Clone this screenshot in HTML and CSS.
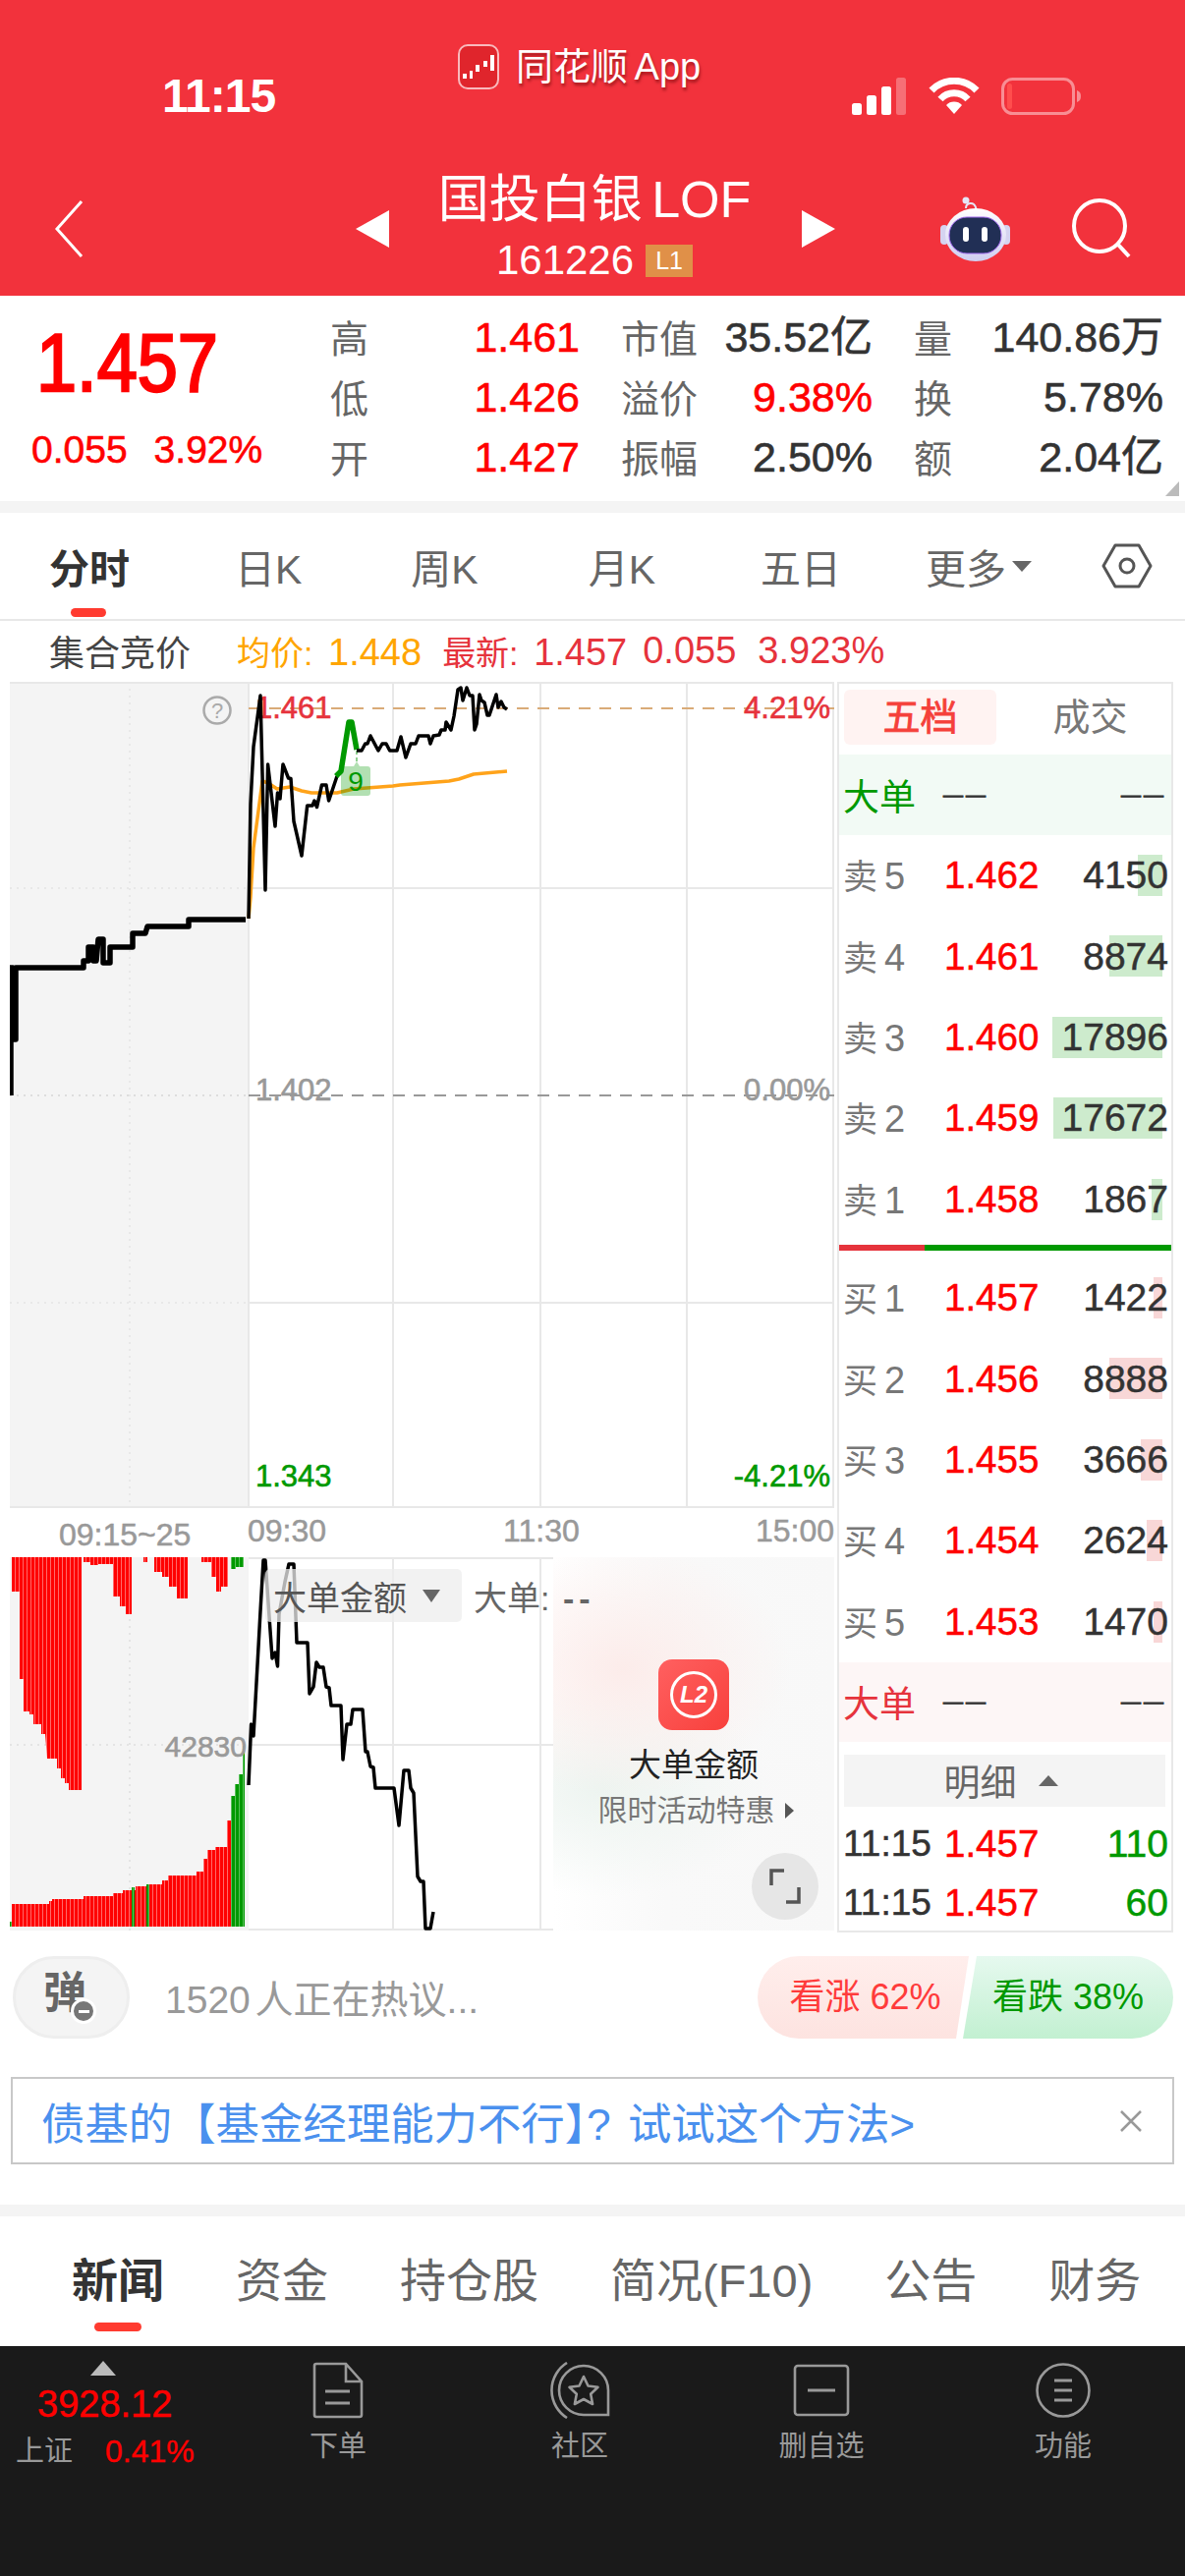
FILE: index.html
```html
<!DOCTYPE html>
<html lang="zh-CN">
<head>
    <meta charset="UTF-8">
    <meta name="viewport" content="width=device-width, initial-scale=1.0">
    <title>国投白银 LOF</title>
    <link rel="stylesheet" href="styles.css">
</head>
<body>
<div class="screen">

    <header class="top">
        <div class="status">
            <span class="status-time">11:15</span>
            <div class="status-app">
                <svg class="app-logo" viewBox="0 0 42 46">
                    <rect x="1" y="1" width="40" height="44" rx="9" fill="#e0252c" stroke="#f9b9bc" stroke-width="2"/>
                    <path d="M5 30h4v5H5zM12 27h3v8h-3zM18 21h4v7h-4zM26 17h4v6h-4zM33 11h4v16h-4z" fill="#fff"/>
                </svg>
                <span class="app-name">同花顺 App</span>
            </div>
            <div class="status-icons">
                <svg width="56" height="38" viewBox="0 0 56 38">
                    <rect x="0" y="26" width="10" height="12" rx="2.5" fill="#fff"/>
                    <rect x="15" y="18" width="10" height="20" rx="2.5" fill="#fff"/>
                    <rect x="30" y="9" width="10" height="29" rx="2.5" fill="#fff"/>
                    <rect x="45" y="0" width="10" height="38" rx="2.5" fill="#fff" opacity=".3"/>
                </svg>
                <svg width="52" height="38" viewBox="0 0 52 38">
                    <path d="M3 13a32 32 0 0 1 46 0" fill="none" stroke="#fff" stroke-width="7"/>
                    <path d="M12 22a19 19 0 0 1 28 0" fill="none" stroke="#fff" stroke-width="7"/>
                    <path d="M26 37l-8-9a11 11 0 0 1 16 0z" fill="#fff"/>
                </svg>
                <svg width="82" height="38" viewBox="0 0 82 38">
                    <rect x="1.500" y="1.500" width="72" height="35" rx="10" fill="none" stroke="#fff" stroke-opacity=".45" stroke-width="3"/>
                    <rect x="6" y="6" width="5" height="26" rx="2.5" fill="#ff4d4d"/>
                    <path d="M77 13c3 1 4 3 4 6s-1 5-4 6z" fill="#fff" opacity=".45"/>
                </svg>
            </div>
        </div>
        <div class="nav">
            <svg class="nav-back" viewBox="0 0 30 58"><path d="M28 1L3 29l25 28" fill="none" stroke="#fff" stroke-width="3"/></svg>
            <span class="arrow-left"></span>
            <div class="title-block">
                <div class="title">国投白银 LOF</div>
                <div class="code">161226<span class="level">L1</span></div>
            </div>
            <span class="arrow-right"></span>
            <svg class="robot" viewBox="0 0 72 66">
                <defs>
                    <linearGradient id="helmet" x1="0" y1="0" x2="0" y2="1"><stop offset="0" stop-color="#fff"/><stop offset="1" stop-color="#cfcdf0"/></linearGradient>
                </defs>
                <path d="M26 12c0-6 8-7 10-1l1 5" fill="none" stroke="#e6e6f6" stroke-width="2"/>
                <circle cx="26" cy="4" r="3.500" fill="#e6e6f6"/>
                <rect x="0" y="29" width="8" height="20" rx="4" fill="#d5d3f0"/>
                <rect x="63" y="29" width="8" height="20" rx="4" fill="#d5d3f0"/>
                <ellipse cx="36" cy="39" rx="31" ry="27" fill="url(#helmet)"/>
                <rect x="9" y="21" width="53" height="37" rx="18" fill="#212f55" stroke="#a46cf0" stroke-width="1"/>
                <rect x="23" y="31" width="6" height="15" rx="3" fill="#fff"/>
                <rect x="42" y="31" width="6" height="15" rx="3" fill="#fff"/>
            </svg>
            <svg class="search" viewBox="0 0 60 62">
                <circle cx="28" cy="28" r="26" fill="none" stroke="#fff" stroke-width="4"/>
                <path d="M47 47l11 12" stroke="#fff" stroke-width="4"/>
            </svg>
        </div>
    </header>

    <section class="quote">
        <div class="quote-main">
            <div class="last-price"><span>1.457</span></div>
            <div class="last-change"><span>0.055</span><span>3.92%</span></div>
        </div>
        <div class="quote-grid">
            <div class="cell"><span class="cell-label">高</span><span class="red">1.461</span></div>
            <div class="cell"><span class="cell-label">市值</span><span>35.52<span class="unit">亿</span></span></div>
            <div class="cell"><span class="cell-label">量</span><span>140.86<span class="unit">万</span></span></div>
            <div class="cell"><span class="cell-label">低</span><span class="red">1.426</span></div>
            <div class="cell"><span class="cell-label">溢价</span><span class="red">9.38%</span></div>
            <div class="cell"><span class="cell-label">换</span><span>5.78%</span></div>
            <div class="cell"><span class="cell-label">开</span><span class="red">1.427</span></div>
            <div class="cell"><span class="cell-label">振幅</span><span>2.50%</span></div>
            <div class="cell"><span class="cell-label">额</span><span>2.04<span class="unit">亿</span></span></div>
        </div>
        <span class="corner"></span>
    </section>

    <nav class="periods">
        <span class="period period-on">分时</span>
        <span class="period p-day">日K</span>
        <span class="period p-week">周K</span>
        <span class="period p-month">月K</span>
        <span class="period p-five">五日</span>
        <span class="period p-more">更多<i class="more-caret"></i></span>
        <svg class="hex" viewBox="0 0 52 46">
            <path d="M14 2h24l12 21-12 21H14L2 23z" fill="none" stroke="#555" stroke-width="3" stroke-linejoin="round"/>
            <circle cx="26" cy="23" r="7" fill="none" stroke="#555" stroke-width="3"/>
        </svg>
    </nav>

    <div class="summary">
        <span class="auction">集合竞价</span>
        <span class="avg"><small>均价:</small> 1.448</span>
        <span class="latest"><small>最新:</small> 1.457</span>
        <span class="latest s-change">0.055</span>
        <span class="latest s-pct">3.923%</span>
    </div>

    <section class="market">
        <div class="charts">
            <svg class="chart-main" viewBox="10 694 839 841" width="839" height="841">
                <rect x="10" y="694" width="243" height="841" fill="#f4f4f4"/>
                <path d="M10 695H849V1534H10" fill="none" stroke="#e8e8e8" stroke-width="2"/>
                <path d="M253 694V1535M400 694V1535M550 694V1535M699 694V1535M848 694V1535M253 904H849M253 1326H849" stroke="#e8e8e8" stroke-width="2" fill="none"/>
                <path d="M10 904H253M10 1326H253M132 694V1535" stroke="#e8e8e8" stroke-width="2" stroke-dasharray="2 5" fill="none"/>
                <path d="M253 721H849" stroke="#d9ab78" stroke-width="2" stroke-dasharray="12 9"/>
                <path d="M253 1115H849" stroke="#999" stroke-width="2" stroke-dasharray="12 9"/>
                <path d="M10 1115H253" stroke="#ddd" stroke-width="2" stroke-dasharray="2 5"/>
                <circle cx="221" cy="723" r="13.500" fill="none" stroke="#aaa" stroke-width="2.500"/>
                <text class="help" x="221" y="731" text-anchor="middle">?</text>
                <text class="axis axis-up" x="260" y="731">1.461</text>
                <text class="axis axis-up" x="845" y="731" text-anchor="end">4.21%</text>
                <text class="axis axis-mid" x="260" y="1120">1.402</text>
                <text class="axis axis-mid" x="845" y="1120" text-anchor="end">0.00%</text>
                <text class="axis axis-down" x="260" y="1513">1.343</text>
                <text class="axis axis-down" x="845" y="1513" text-anchor="end">-4.21%</text>
                <polyline class="line-auction" points="11,1115 11,985 13,985 13,1058 16,1058 16,985 85,985 85,978 90,978 90,964 95,964 95,978 98,978 100,956 105,956 105,980 112,980 112,964 135,964 135,950 148,950 150,943 192,943 192,936 250,936"/>
                <polyline class="line-avg" points="253,935 255,913 258,863 267,795 273,797 282,803 295,801 307,805 317,807 343,807 360,803 400,800 407,799 457,795 467,793 482,788 516,785"/>
                <path class="badge" d="M350 780h10l3-5 3 5h8a3 3 0 0 1 3 3v24a3 3 0 0 1-3 3h-24a3 3 0 0 1-3-3v-24a3 3 0 0 1 3-3z"/>
                <path d="M363 764V776" stroke="#8fd08f" stroke-width="2" stroke-dasharray="4 3"/>
                <text class="badge-num" x="362" y="805" text-anchor="middle">9</text>
                <polyline class="line-price" points="253,935 255,818 258,760 265,708 270,906 272.6,778 280,841 282.5,807 285,813 288,778 293.5,792 296,792.5 299,836 302,849 307,871 312.7,820 318,820 320,815 322.5,821.5 327.5,799 332,799 334.6,815 343,790"/>
                <polyline class="line-hot" points="342,790 347,785 355,735 358,735 363,763"/>
                <polyline class="line-thin" points="363,764 368,764 371.7,757 374,757 377,749 385,764 389,757 393,757 396.7,764 404,764 408,750 413,771 418,757 423,757 426,749 436,749 438,757 441,749 447,748 449,743 453,743 454,735 459,743 462,729 466,702 469,700 471,713 475,700 478,708 481,708 483,743 485,737 488,707 490,713 493,715 496,728 498,728 505,707 507,720 510,714 513,720 516,722"/>
            </svg>

            <div class="time-axis">
                <span class="tick-auction">09:15~25</span>
                <span class="tick">09:30</span>
                <span class="tick tick-mid">11:30</span>
                <span class="tick tick-end">15:00</span>
            </div>

            <div class="flow">
                <svg class="chart-flow" viewBox="10 1585 839 380" width="839" height="380">
                    <defs>
                        <pattern id="redBars" width="4" height="8" patternUnits="userSpaceOnUse"><rect width="4" height="8" fill="#ff6a6a"/><rect width="3" height="8" fill="#ff0000"/></pattern>
                        <pattern id="greenBars" width="4" height="8" patternUnits="userSpaceOnUse"><rect width="4" height="8" fill="#5cc05c"/><rect width="3" height="8" fill="#009900"/></pattern>
                    </defs>
                    <rect x="10" y="1585" width="243" height="380" fill="#f4f4f4"/>
                    <path d="M253 1586H849M400 1585V1965M550 1585V1965M253 1776H849M253 1964H849" stroke="#e8e8e8" stroke-width="2" fill="none"/>
                    <path d="M10 1776H253M132 1585V1965" stroke="#e4e4e4" stroke-width="2" stroke-dasharray="2 5" fill="none"/>
                    <path fill="url(#redBars)" d="M12 1585V1620H16L20 1620V1709H24V1742H30V1745H34V1755H42V1765H46L48 1790H58V1800H62V1810H66V1815H70V1822H83V1585H85V1590H92V1593H100V1592H115V1625H122V1635H128V1643H134V1585H146V1590H150V1585H157V1600H165V1605H172V1615H180V1627H191V1585H205V1590H215V1605H220V1620H225V1615H232V1585Z"/>
                    <path fill="url(#greenBars)" d="M235 1585V1597H240V1595H248V1585Z"/>
                    <path fill="url(#redBars)" d="M12 1961V1938H50V1935H53V1933H85V1930H115V1927H125V1924H138V1920H150V1918H165V1914H171V1909H200V1905H207V1892H211V1883H219V1880H231V1853H235V1961Z"/>
                    <path fill="url(#greenBars)" d="M235 1961V1828H239V1816H243V1806H247V1777H249V1961ZM134 1961V1921H137V1961ZM149 1961V1918H152V1961ZM10 1961V1956H12V1961Z"/>
                    <text class="axis axis-flow" x="251" y="1788" text-anchor="end">42830</text>
                    <polyline class="line-thin" points="253,1817 255.6,1755 258,1767 265,1640 268,1588 270,1588 277,1688 280,1682 282.5,1696 284,1643 290,1610 294,1592 299,1592 302,1672 313,1672 315,1724 319,1717 322,1692 325,1697 329,1697 332,1717 335,1718 337,1736 347,1736 349,1791 353,1755 357,1755 359,1740 369,1740 372,1783 374,1783 377,1798 380,1799 382,1820 401,1820 406,1858 411,1802 416,1802 418,1820 421,1825 425,1910 428,1915 431,1915 433,1963 438,1963 441,1946"/>
                </svg>
                <div class="upsell">
                    <div class="l2-icon"><span class="l2-ring">L2</span></div>
                    <div class="upsell-title">大单金额</div>
                    <div class="upsell-sub">限时活动特惠<i class="sub-caret"></i></div>
                    <span class="expand">
                        <svg width="32" height="36" viewBox="0 0 32 36"><path d="M15 2H2V17M17 34H30V19" fill="none" stroke="#555" stroke-width="3.500"/></svg>
                    </span>
                </div>
                <div class="flow-tools">
                    <span class="flow-select">大单金额<i class="select-caret"></i></span>
                    <span class="flow-value">大单: <span class="flow-dash">--</span></span>
                </div>
            </div>
        </div>

        <aside class="book">
            <div class="book-tabs">
                <span class="book-tab book-tab-on">五档</span>
                <span class="book-tab">成交</span>
            </div>
            <div class="big-row big-green"><span class="big-label">大单</span><span class="dash dash-price">——</span><span class="dash">——</span></div>

            <div class="book-row"><span class="side">卖<b>5</b></span><span class="price">1.462</span><span class="vol">4150</span><i class="depth depth-sell" style="width:25px"></i></div>
            <div class="book-row"><span class="side">卖<b>4</b></span><span class="price">1.461</span><span class="vol">8874</span><i class="depth depth-sell" style="width:54px"></i></div>
            <div class="book-row"><span class="side">卖<b>3</b></span><span class="price">1.460</span><span class="vol">17896</span><i class="depth depth-sell" style="width:112px"></i></div>
            <div class="book-row"><span class="side">卖<b>2</b></span><span class="price">1.459</span><span class="vol">17672</span><i class="depth depth-sell" style="width:111px"></i></div>
            <div class="book-row"><span class="side">卖<b>1</b></span><span class="price">1.458</span><span class="vol">1867</span><i class="depth depth-sell" style="width:11px"></i></div>

            <div class="split"><i class="split-red"></i><i class="split-green"></i></div>

            <div class="book-row"><span class="side">买<b>1</b></span><span class="price">1.457</span><span class="vol">1422</span><i class="depth depth-buy" style="width:9px"></i></div>
            <div class="book-row"><span class="side">买<b>2</b></span><span class="price">1.456</span><span class="vol">8888</span><i class="depth depth-buy" style="width:54px"></i></div>
            <div class="book-row"><span class="side">买<b>3</b></span><span class="price">1.455</span><span class="vol">3666</span><i class="depth depth-buy" style="width:22px"></i></div>
            <div class="book-row"><span class="side">买<b>4</b></span><span class="price">1.454</span><span class="vol">2624</span><i class="depth depth-buy" style="width:16px"></i></div>
            <div class="book-row"><span class="side">买<b>5</b></span><span class="price">1.453</span><span class="vol">1470</span><i class="depth depth-buy" style="width:9px"></i></div>

            <div class="big-row big-red"><span class="big-label">大单</span><span class="dash dash-price">——</span><span class="dash">——</span></div>
            <div class="detail-head">明细<i class="detail-caret"></i></div>
            <div class="trade"><span class="trade-time">11:15</span><span class="price">1.457</span><span class="trade-vol">110</span></div>
            <div class="trade"><span class="trade-time">11:15</span><span class="price">1.457</span><span class="trade-vol">60</span></div>
        </aside>
    </section>

    <div class="chat">
        <div class="danmu">弹<i class="danmu-off"></i></div>
        <span class="chat-text">1520 人正在热议...</span>
        <div class="votes">
            <span class="vote vote-up">看涨 62%</span>
            <span class="vote vote-down">看跌 38%</span>
        </div>
    </div>

    <div class="banner">
        <span class="banner-text">债基的【基金经理能力不行<span class="bracket-end">】</span>? 试试这个方法&gt;</span>
        <svg class="banner-close" width="24" height="24" viewBox="0 0 24 24"><path d="M2 2l20 20M22 2L2 22" stroke="#999" stroke-width="2.500"/></svg>
    </div>

    <nav class="news-tabs">
        <span class="news-tab news-tab-on">新闻</span>
        <span class="news-tab">资金</span>
        <span class="news-tab">持仓股</span>
        <span class="news-tab">简况(F10)</span>
        <span class="news-tab">公告</span>
        <span class="news-tab">财务</span>
    </nav>

    <footer class="bottom">
        <div class="index">
            <i class="index-arrow"></i>
            <div class="index-value">3928.12</div>
            <div class="index-line"><span class="index-name">上证</span><span class="index-pct">0.41%</span></div>
        </div>
        <div class="tool">
            <svg width="52" height="58" viewBox="0 0 52 58">
                <path d="M2 4a2 2 0 0 1 2-2h30l16 18v34a2 2 0 0 1-2 2H4a2 2 0 0 1-2-2zM34 2v18h16" fill="none" stroke="#999" stroke-width="2.600"/>
                <path d="M13 30h25M13 42h25" stroke="#999" stroke-width="3"/>
            </svg>
            <span>下单</span>
        </div>
        <div class="tool">
            <svg width="62" height="58" viewBox="0 0 62 58">
                <path d="M18 1a33 33 0 0 0 0 56" fill="none" stroke="#999" stroke-width="2.600"/>
                <path d="M35 4a25 25 0 0 1 25 25v25H35a25 25 0 0 1 0-50z" fill="none" stroke="#999" stroke-width="2.600"/>
                <path d="M35 15l4.500 9.500 10 1.300-7.300 7 1.900 10.200-9.100-5-9.100 5 1.900-10.200-7.300-7 10-1.300z" fill="none" stroke="#999" stroke-width="2.600" stroke-linejoin="round"/>
            </svg>
            <span>社区</span>
        </div>
        <div class="tool">
            <svg width="58" height="58" viewBox="0 0 58 58">
                <rect x="2" y="4" width="54" height="50" rx="3" fill="none" stroke="#999" stroke-width="2.600"/>
                <path d="M15 29h28" stroke="#999" stroke-width="3"/>
            </svg>
            <span>删自选</span>
        </div>
        <div class="tool">
            <svg width="58" height="58" viewBox="0 0 58 58">
                <circle cx="29" cy="29" r="26.500" fill="none" stroke="#999" stroke-width="2.600"/>
                <path d="M20 19h18M20 29h18M20 39h18" stroke="#999" stroke-width="3"/>
            </svg>
            <span>功能</span>
        </div>
    </footer>
</div>
</body>
</html>
```

FILE: styles.css
```css
* {
    box-sizing: border-box;
}

body {
    margin: 0;
    background-color: #ffffff;
    font-family: "Liberation Sans", "Noto Sans CJK SC", sans-serif;
    color: #333333;
}

i {
    display: block;
}

.screen {
    width: 1206px;
    height: 2622px;
    overflow: hidden;
    display: flex;
    flex-direction: column;
}

.red {
    color: #ff0000;
}

/* red header */
.top {
    height: 301px;
    flex-shrink: 0;
    background-color: #f2323c;
    color: #ffffff;
}

.status {
    height: 140px;
    display: flex;
    align-items: flex-start;
    padding-left: 165px;
}

.status-time {
    margin-top: 68px;
    width: 115px;
    font-size: 48px;
    line-height: 60px;
    font-weight: 700;
    letter-spacing: -1px;
    white-space: nowrap;
}

.status-app {
    margin-left: 186px;
    margin-top: 45px;
    display: flex;
    align-items: center;
    gap: 17px;
}

.app-logo {
    width: 42px;
    height: 46px;
}

.app-name {
    font-size: 38px;
    word-spacing: -4px;
    line-height: 46px;
    text-shadow: 1px 3px 3px rgba(90, 0, 0, 0.5);
    white-space: nowrap;
}

.status-icons {
    margin-left: auto;
    margin-top: 79px;
    padding-right: 105px;
    display: flex;
    gap: 22px;
}

.nav {
    height: 161px;
    display: flex;
    align-items: center;
    padding-top: 24px;
    padding-left: 55px;
}

.nav-back {
    width: 30px;
    height: 58px;
}

.arrow-left,
.arrow-right {
    width: 0;
    height: 0;
    border-top: 19px solid transparent;
    border-bottom: 19px solid transparent;
}

.arrow-left {
    margin-left: 277px;
    border-right: 34px solid #ffffff;
}

.arrow-right {
    border-left: 34px solid #ffffff;
}

.title-block {
    width: 420px;
    padding-right: 2px;
    text-align: center;
}

.title {
    font-size: 52px;
    word-spacing: -5px;
    line-height: 60px;
    white-space: nowrap;
}

.code {
    margin-top: 5px;
    height: 55px;
    display: flex;
    align-items: center;
    justify-content: center;
    font-size: 42px;
}

.level {
    margin-left: 12px;
    width: 48px;
    height: 33px;
    line-height: 33px;
    font-size: 25px;
    background-color: #e09048;
}

.robot {
    margin-left: 107px;
    width: 72px;
    height: 66px;
}

.search {
    margin-left: 62px;
    width: 60px;
    height: 62px;
}

/* quote */
.quote {
    position: relative;
    height: 221px;
    flex-shrink: 0;
    border-bottom: 12px solid #f4f4f4;
    display: flex;
}

.quote-main {
    width: 336px;
    flex-shrink: 0;
    padding-left: 32px;
}

.last-price {
    height: 112px;
    padding-top: 18px;
    padding-left: 5px;
    font-size: 84px;
    line-height: 100px;
    color: #ff0000;
    -webkit-text-stroke: 2.5px #ff0000;
}

.last-price span {
    display: inline-block;
    transform: scaleX(0.88);
    transform-origin: left center;
}

.last-change {
    margin-top: 20px;
    display: flex;
    gap: 27px;
    font-size: 39px;
    line-height: 50px;
    color: #ff0000;
    -webkit-text-stroke: 0.6px #ff0000;
}

.quote-grid {
    padding-top: 12px;
    display: grid;
    grid-template-columns: 254px 256px 254px;
    grid-auto-rows: 61px;
    column-gap: 42px;
}

.cell {
    display: flex;
    justify-content: space-between;
    align-items: center;
    font-size: 43px;
    color: #333333;
    white-space: nowrap;
    -webkit-text-stroke: 0.6px currentColor;
}

.cell-label {
    margin-top: -3px;
    font-size: 39px;
    color: #666666;
    -webkit-text-stroke: 0;
}

.unit {
    line-height: 0;
}

.corner {
    position: absolute;
    right: 6px;
    bottom: 5px;
    width: 0;
    height: 0;
    border-left: 14px solid transparent;
    border-bottom: 15px solid #bbbbbb;
}

/* period tabs */
.periods {
    position: relative;
    height: 110px;
    flex-shrink: 0;
    border-bottom: 2px solid #e8e8e8;
    display: flex;
    align-items: center;
    font-size: 41px;
    color: #666666;
}

.period {
    white-space: nowrap;
}

.period-on {
    position: relative;
    margin-left: 50px;
    font-weight: 700;
    color: #333333;
}

.period-on::after {
    content: "";
    position: absolute;
    left: 22px;
    top: 73px;
    width: 36px;
    height: 9px;
    border-radius: 5px;
    background-color: #ff3b30;
}

.p-day {
    margin-left: 107px;
}

.p-week {
    margin-left: 111px;
}

.p-month {
    margin-left: 112px;
}

.p-five {
    margin-left: 107px;
}

.p-more {
    margin-left: 86px;
    display: flex;
    align-items: center;
    gap: 6px;
}

.more-caret {
    width: 0;
    height: 0;
    border-left: 10px solid transparent;
    border-right: 10px solid transparent;
    border-top: 11px solid #666666;
}

.hex {
    margin-left: 71px;
    width: 52px;
    height: 46px;
}

/* summary line */
.summary {
    height: 60px;
    flex-shrink: 0;
    display: flex;
    align-items: center;
    padding-left: 50px;
    font-size: 38px;
    word-spacing: 5px;
    white-space: nowrap;
}

.summary small {
    font-size: 34px;
}

.auction {
    font-size: 36px;
    color: #444444;
}

.avg {
    margin-left: 47px;
    color: #ffa500;
}

.latest {
    margin-left: 21px;
    color: #e6333c;
}

.latest.s-change {
    margin-left: 16px;
}

.latest.s-pct {
    margin-left: 22px;
}

/* chart and order book */
.market {
    height: 1273px;
    flex-shrink: 0;
    margin-top: 2px;
    padding-left: 10px;
    display: flex;
    gap: 3px;
}

.charts {
    width: 839px;
    flex-shrink: 0;
}

.chart-main,
.chart-flow {
    display: block;
}

.axis {
    font-size: 31px;
    stroke-width: 0.6;
}

.axis-up {
    fill: #e6333c;
    stroke: #e6333c;
}

.axis-mid {
    fill: #999999;
    stroke: #999999;
}

.axis-down {
    fill: #009900;
    stroke: #009900;
}

.axis-flow {
    fill: #999999;
    stroke: #999999;
    font-size: 30px;
}

.help {
    font-size: 22px;
    fill: #aaaaaa;
}

.badge {
    fill: #009900;
    fill-opacity: 0.3;
}

.badge-num {
    font-size: 28px;
    fill: #009900;
}

.line-auction,
.line-avg,
.line-price,
.line-hot,
.line-thin {
    fill: none;
    stroke-linejoin: round;
}

.line-auction {
    stroke: #000000;
    stroke-width: 5.5;
}

.line-avg {
    stroke: #ffa31a;
    stroke-width: 3.5;
}

.line-price,
.line-thin {
    stroke: #000000;
    stroke-width: 3.5;
}

.line-hot {
    stroke: #009900;
    stroke-width: 5.5;
}

.time-axis {
    height: 50px;
    display: flex;
    align-items: flex-start;
    padding-left: 50px;
    font-size: 32px;
    line-height: 46px;
    color: #999999;
    white-space: nowrap;
    -webkit-text-stroke: 0.5px #999999;
}

.tick-auction {
    margin-top: 4px;
    width: 192px;
}

.tick-mid {
    margin-left: 180px;
}

.tick-end {
    margin-left: auto;
}

.flow {
    position: relative;
    height: 380px;
}

.flow-tools {
    position: absolute;
    left: 260px;
    top: 12px;
    display: flex;
    align-items: center;
    font-size: 34px;
    color: #666666;
    white-space: nowrap;
}

.flow-select {
    width: 200px;
    height: 54px;
    padding-left: 8px;
    border-radius: 5px;
    background-color: rgba(238, 238, 238, 0.75);
    display: flex;
    align-items: center;
    gap: 16px;
    color: #555555;
}

.select-caret {
    width: 0;
    height: 0;
    border-left: 9px solid transparent;
    border-right: 9px solid transparent;
    border-top: 13px solid #666666;
}

.flow-value {
    margin-left: 12px;
}

.flow-dash {
    margin-left: 4px;
    letter-spacing: 5px;
    font-weight: 700;
}

.upsell {
    position: absolute;
    right: 0;
    top: 0;
    bottom: 0;
    width: 286px;
    display: flex;
    flex-direction: column;
    align-items: center;
    padding-top: 104px;
    background:
        radial-gradient(ellipse 170px 130px at 25% 30%, #fcecea 0%, rgba(252, 236, 234, 0) 100%),
        radial-gradient(ellipse 170px 110px at 18% 62%, #edf4f0 0%, rgba(237, 244, 240, 0) 100%),
        linear-gradient(90deg, #ffffff 0%, #f9f9f9 40%, #f8f8f8 100%);
}

.l2-icon {
    width: 72px;
    height: 72px;
    border-radius: 14px;
    background: linear-gradient(135deg, #ff6060, #f8403c);
    display: flex;
    align-items: center;
    justify-content: center;
}

.l2-ring {
    width: 48px;
    height: 48px;
    border-radius: 50%;
    border: 3px solid #ffffff;
    color: #ffffff;
    font-size: 24px;
    line-height: 42px;
    font-weight: 700;
    font-style: italic;
    text-align: center;
}

.upsell-title {
    margin-top: 14px;
    font-size: 33px;
    line-height: 44px;
    color: #222222;
}

.upsell-sub {
    margin-top: 4px;
    margin-left: 4px;
    display: flex;
    align-items: center;
    gap: 10px;
    font-size: 30px;
    line-height: 40px;
    color: #777777;
}

.sub-caret {
    width: 0;
    height: 0;
    border-top: 8px solid transparent;
    border-bottom: 8px solid transparent;
    border-left: 9px solid #555555;
}

.expand {
    position: absolute;
    right: 16px;
    bottom: 11px;
    width: 68px;
    height: 68px;
    border-radius: 50%;
    background-color: #e6e6e6;
    display: flex;
    align-items: center;
    justify-content: center;
}

.book {
    width: 342px;
    height: 1273px;
    border: 2px solid #e8e8e8;
    font-size: 39px;
}

.book-tabs {
    height: 72px;
    padding: 6px 0 0 5px;
    display: flex;
}

.book-tab {
    width: 155px;
    height: 56px;
    line-height: 56px;
    border-radius: 6px;
    text-align: center;
    font-size: 38px;
    color: #777777;
}

.book-tab:last-child {
    margin-left: 18px;
}

.book-tab-on {
    background-color: #fff3f2;
    color: #f5403a;
    -webkit-text-stroke: 0.8px #f5403a;
}

.big-row {
    height: 82px;
    display: flex;
    align-items: center;
    padding: 0 5px 0 4px;
    justify-content: space-between;
}

.big-green {
    background-color: #f2faf5;
}

.big-red {
    height: 81px;
    background-color: #fdf6f6;
}

.big-label {
    width: 102px;
    font-size: 37px;
}

.big-green .big-label {
    color: #009900;
}

.big-red .big-label {
    color: #e6333c;
}

.dash {
    font-size: 20px;
    letter-spacing: 3px;
    color: #333333;
    -webkit-text-stroke: 1px #333333;
}

.dash-price {
    margin-right: auto;
}

.book-row {
    position: relative;
    height: 82.4px;
    display: flex;
    align-items: center;
    padding: 0 3px 0 4px;
}

.side {
    margin-top: -3px;
    width: 103px;
    flex-shrink: 0;
    font-size: 35px;
    color: #777777;
    white-space: nowrap;
}

.side b {
    margin-left: 7px;
    font-weight: 400;
    font-size: 38px;
}

.price {
    font-size: 38.5px;
    color: #ff0000;
    -webkit-text-stroke: 0.5px #ff0000;
}

.vol {
    position: relative;
    z-index: 1;
    margin-left: auto;
    color: #333333;
    -webkit-text-stroke: 0.5px #333333;
}

.depth {
    position: absolute;
    right: 9px;
    top: 20px;
    height: 42px;
}

.depth-sell {
    background-color: #cdebcd;
}

.depth-buy {
    background-color: #f8d7d7;
}

.split {
    margin: 5px 0 7px;
    height: 6px;
    display: flex;
}

.split-red {
    width: 87px;
    background-color: #e6333c;
}

.split-green {
    flex: 1;
    background-color: #009900;
}

.detail-head {
    margin: 13px 6px 8px 5px;
    height: 53px;
    background-color: #f4f4f4;
    display: flex;
    align-items: center;
    justify-content: center;
    gap: 22px;
    padding-right: 8px;
    font-size: 37px;
    color: #666666;
}

.detail-caret {
    width: 0;
    height: 0;
    border-left: 10px solid transparent;
    border-right: 10px solid transparent;
    border-bottom: 11px solid #666666;
}

.trade {
    height: 60px;
    display: flex;
    align-items: center;
    padding: 0 3px 0 4px;
}

.trade-time {
    width: 103px;
    font-size: 37px;
    color: #333333;
    -webkit-text-stroke: 0.5px #333333;
}

.trade-vol {
    margin-left: auto;
    color: #009900;
    -webkit-text-stroke: 0.5px #009900;
}

/* chat row */
.chat {
    height: 84px;
    flex-shrink: 0;
    margin-top: 24px;
    padding-left: 13px;
    display: flex;
    align-items: center;
}

.danmu {
    position: relative;
    width: 119px;
    height: 84px;
    border-radius: 42px;
    border: 3px solid #eeeeee;
    background-color: #f4f4f4;
    padding-left: 28px;
    font-size: 44px;
    line-height: 70px;
    font-weight: 700;
    color: #666666;
}

.danmu-off {
    position: absolute;
    left: 56px;
    top: 40px;
    width: 26px;
    height: 26px;
    border-radius: 50%;
    border: 3px solid #ffffff;
    background: linear-gradient(#ffffff, #ffffff) center / 11px 3px no-repeat, #777777;
}

.chat-text {
    margin-left: 36px;
    margin-top: -2px;
    font-size: 39px;
    word-spacing: -6px;
    color: #999999;
}

.votes {
    margin-left: auto;
    padding-right: 12px;
    display: flex;
    font-size: 36px;
}

.vote {
    height: 84px;
    line-height: 84px;
    text-align: center;
    white-space: nowrap;
}

.vote-up {
    width: 215px;
    padding-left: 4px;
    color: #ff3b3b;
    background: linear-gradient(#ffeeec, #fde3e0);
    clip-path: path("M42 0H215L202 84H42A42 42 0 0 1 42 0Z");
}

.vote-down {
    width: 214px;
    margin-left: -6px;
    color: #009900;
    background: linear-gradient(#e6f9ef, #c2f0d1);
    clip-path: path("M14 0H172A42 42 0 0 1 172 84H0Z");
}

/* banner */
.banner {
    height: 89px;
    flex-shrink: 0;
    margin: 39px 11px 0;
    border: 2px solid #c8c8c8;
    display: flex;
    align-items: center;
    justify-content: space-between;
    padding: 0 30px 0 29px;
}

.banner-text {
    font-size: 44.4px;
    word-spacing: 5px;
    color: #4a90ee;
    white-space: nowrap;
}

.bracket-end {
    font-feature-settings: "halt";
}

/* news tabs */
.news-tabs {
    margin-top: 41px;
    height: 144px;
    flex-shrink: 0;
    border-top: 12px solid #f4f4f4;
    display: flex;
    align-items: center;
    gap: 73px;
    padding-left: 73px;
    padding-bottom: 10px;
    font-size: 47px;
    color: #666666;
}

.news-tab {
    white-space: nowrap;
}

.news-tab-on {
    position: relative;
    color: #333333;
    font-weight: 700;
}

.news-tab-on::after {
    content: "";
    position: absolute;
    left: 23px;
    top: 81px;
    width: 48px;
    height: 9px;
    border-radius: 5px;
    background-color: #ff3b30;
}

/* bottom bar */
.bottom {
    flex: 1;
    background-color: #1a1a1a;
    display: flex;
    align-items: flex-start;
    color: #999999;
}

.index {
    width: 221px;
    flex-shrink: 0;
    padding-top: 15px;
}

.index-arrow {
    margin-left: 92px;
    width: 0;
    height: 0;
    border-left: 13px solid transparent;
    border-right: 13px solid transparent;
    border-bottom: 15px solid #bbbbbb;
}

.index-value {
    margin-left: 38px;
    margin-top: 6px;
    font-size: 38px;
    line-height: 46px;
    color: #ff0000;
    -webkit-text-stroke: 0.5px #ff0000;
}

.index-line {
    margin-left: 16px;
    margin-top: 2px;
    display: flex;
    align-items: center;
    gap: 33px;
    line-height: 46px;
}

.index-name {
    font-size: 29px;
    color: #999999;
}

.index-pct {
    font-size: 32px;
    color: #ff0000;
    -webkit-text-stroke: 0.4px #ff0000;
}

.tool {
    width: 246px;
    padding-top: 16px;
    display: flex;
    flex-direction: column;
    align-items: center;
    gap: 8px;
    font-size: 29px;
    line-height: 40px;
}
```
